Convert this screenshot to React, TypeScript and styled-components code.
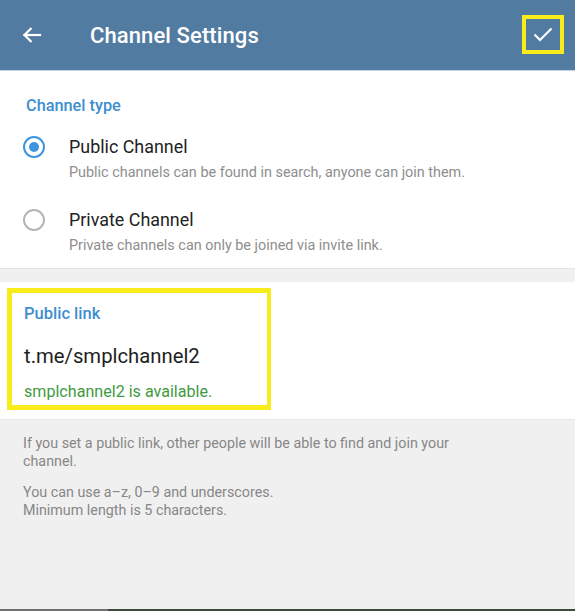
import React from "react";
import styled, { createGlobalStyle } from "styled-components";

const Global = createGlobalStyle`
  html, body { margin: 0; padding: 0; }
  body { font-family: Roboto, "Noto Sans", Arial, sans-serif; background: #f0f0f0; }
  * { box-sizing: border-box; }
`;

const Page = styled.div`
  width: 575px;
  height: 611px;
  display: flex;
  flex-direction: column;
  background: #f0f0f0;
  overflow: hidden;
`;

const Header = styled.header`
  height: 71px;
  flex: none;
  background: #527ba2;
  border-bottom: 1px solid #c5d3e0;
  display: flex;
  align-items: center;
  padding: 0 11px 0 20px;
`;

const IconButton = styled.div`
  width: 24px;
  height: 24px;
  display: flex;
  align-items: center;
  justify-content: center;
`;

const Title = styled.h1`
  margin: 0 0 0 46px;
  flex: 1;
  color: #fff;
  font-size: 22px;
  font-weight: 500;
  letter-spacing: 0.1px;
`;

const Highlight = styled.div`
  border: 4px solid #f8ec1c;
`;

const CheckBox = styled(Highlight)`
  width: 42px;
  height: 39px;
  display: flex;
  align-items: center;
  justify-content: center;
  margin-bottom: 2px;
`;

const Section = styled.section`
  background: #fff;
  flex: none;
`;

const TypeSection = styled(Section)`
  padding: 24px 0 12px;
  box-shadow: 0 1px 2px rgba(0, 0, 0, 0.06);
`;

const SectionTitle = styled.div`
  color: #3d8ecf;
  font-size: 16.3px;
  font-weight: 500;
  padding-left: 26px;
  line-height: 22px;
`;

const OptionList = styled.div`
  display: flex;
  flex-direction: column;
  gap: 26px;
  margin-top: 19px;
`;

const Option = styled.div`
  display: grid;
  grid-template-columns: 69px 1fr;
  grid-template-rows: 22px 20px;
  row-gap: 5px;
  align-items: center;
`;

const Radio = styled.div<{ $checked?: boolean }>`
  width: 22px;
  height: 22px;
  margin-left: 23px;
  border-radius: 50%;
  border: 2px solid ${(p) => (p.$checked ? "#3d95e0" : "#b5b5b5")};
  display: flex;
  align-items: center;
  justify-content: center;
  &::after {
    content: "";
    display: ${(p) => (p.$checked ? "block" : "none")};
    width: 10px;
    height: 10px;
    border-radius: 50%;
    background: #3d95e0;
  }
`;

const OptionTitle = styled.div`
  font-size: 17.9px;
  color: #222;
  line-height: 22px;
`;

const OptionSub = styled.div`
  grid-column: 2;
  font-size: 14.4px;
  color: #8e8e8e;
  line-height: 20px;
`;

const Gap = styled.div`
  height: 14px;
  flex: none;
  background: #f0f0f0;
  border-top: 1px solid #e4e4e4;
`;

const LinkSection = styled(Section)`
  padding: 6px 0 9px 7px;
  border-bottom: 1px solid #e6e6e6;
`;

const LinkBox = styled(Highlight)`
  width: 264px;
  height: 122px;
  border-width: 5px 4px 5px 5px;
  padding: 11px 0 0 12px;
  display: flex;
  flex-direction: column;
`;

const LinkLabel = styled.div`
  color: #3d8ecf;
  font-size: 16.5px;
  font-weight: 500;
  line-height: 20px;
`;

const LinkValue = styled.div`
  margin-top: 20px;
  font-size: 20.3px;
  color: #1e1e1e;
  line-height: 24px;
`;

const Available = styled.div`
  margin-top: 14px;
  font-size: 16.1px;
  color: #3f9a3f;
  line-height: 20px;
`;

const Info = styled.div`
  flex: 1;
  padding: 14px 80px 0 23px;
  color: #878787;
  font-size: 14.3px;
  line-height: 18px;
`;

const Para = styled.p`
  margin: 0 0 13px;
`;

const BottomBar = styled.div`
  height: 2px;
  flex: none;
  display: flex;
`;

const BarPart = styled.div<{ $w?: number; $c: string }>`
  background: ${(p) => p.$c};
  ${(p) => (p.$w ? `width: ${p.$w}px;` : "flex: 1;")}
`;

export default function App() {
  return (
    <>
      <Global />
      <Page>
        <Header>
          <IconButton>
            <svg width="20" height="20" viewBox="0 0 20 20" fill="none" stroke="#fff" strokeWidth="2.2" strokeLinecap="square">
              <path d="M2.5 10H18" />
              <path d="M9.5 3 2.5 10l7 7" strokeLinecap="butt" />
            </svg>
          </IconButton>
          <Title>Channel Settings</Title>
          <CheckBox>
            <svg width="20" height="16" viewBox="0 0 20 16" fill="none" stroke="#fff" strokeWidth="2.2">
              <path d="M1.5 8.5 7 14 18.5 2.5" />
            </svg>
          </CheckBox>
        </Header>

        <TypeSection>
          <SectionTitle>Channel type</SectionTitle>
          <OptionList>
            <Option>
              <Radio $checked />
              <OptionTitle>Public Channel</OptionTitle>
              <OptionSub>Public channels can be found in search, anyone can join them.</OptionSub>
            </Option>
            <Option>
              <Radio />
              <OptionTitle>Private Channel</OptionTitle>
              <OptionSub>Private channels can only be joined via invite link.</OptionSub>
            </Option>
          </OptionList>
        </TypeSection>

        <Gap />

        <LinkSection>
          <LinkBox>
            <LinkLabel>Public link</LinkLabel>
            <LinkValue>t.me/smplchannel2</LinkValue>
            <Available>smplchannel2 is available.</Available>
          </LinkBox>
        </LinkSection>

        <Info>
          <Para>If you set a public link, other people will be able to find and join your channel.</Para>
          <Para>
            You can use a–z, 0–9 and underscores.
            <br />
            Minimum length is 5 characters.
          </Para>
        </Info>

        <BottomBar>
          <BarPart $w={108} $c="#6e6e6e" />
          <BarPart $c="#3c4a3c" />
        </BottomBar>
      </Page>
    </>
  );
}
